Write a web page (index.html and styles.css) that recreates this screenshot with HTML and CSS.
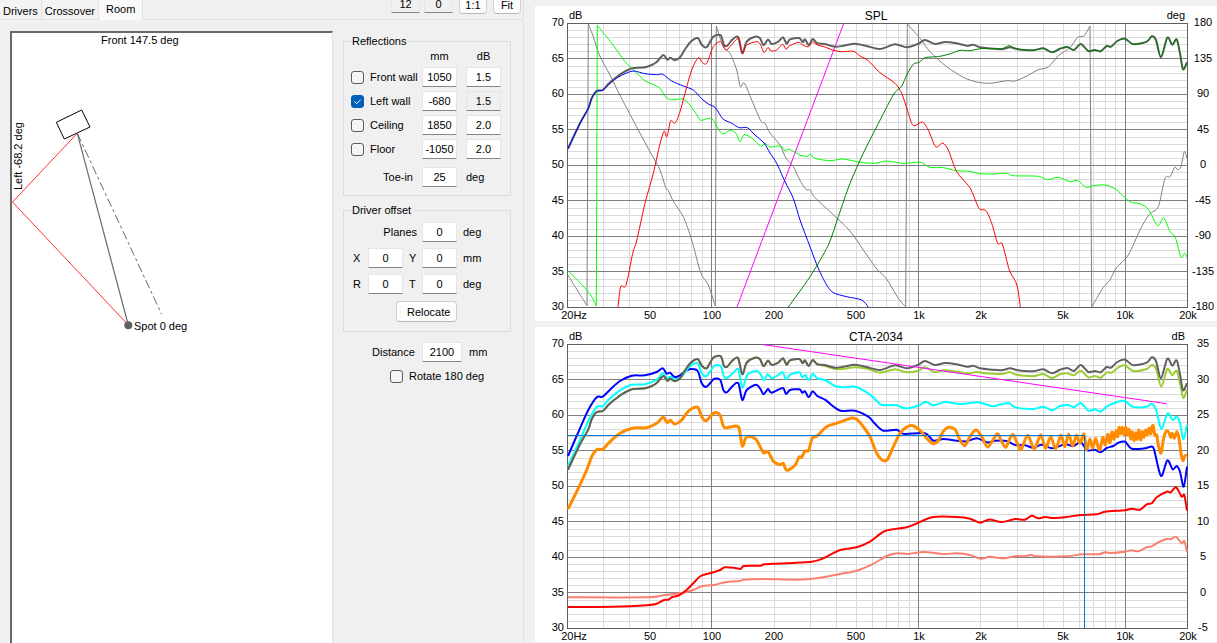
FILE: index.html
```html
<!DOCTYPE html>
<html lang="en">

<head>
    <meta charset="UTF-8">
    <meta name="viewport" content="width=device-width, initial-scale=1.0">
    <title>Room reflections</title>
    <link rel="stylesheet" href="styles.css">
</head>

<body>
    <div class="side">
        <div class="topbar">
            <div class="tabs" role="tablist">
                <button class="tab" role="tab">Drivers</button>
                <button class="tab" role="tab">Crossover</button>
                <button class="tab active" role="tab" aria-selected="true">Room</button>
            </div>
            <div class="scale">
                <input class="num gray" type="text" value="12" aria-label="Scale">
                <input class="num gray" type="text" value="0" aria-label="Offset">
                <button class="btn small">1:1</button>
                <button class="btn small">Fit</button>
            </div>
        </div>

        <div class="page">
            <div class="room">
                <svg width="320" height="400" viewBox="12 33 320 400">
                    <text x="101" y="44">Front 147.5 deg</text>
                    <text transform="translate(22 190) rotate(-90)">Left -68.2 deg</text>
                    <polygon class="box" points="56.3,122.3 81.7,110 90,127 64.3,139" />
                    <path class="axis" d="M77.3 133.3L161.5 314" />
                    <path class="direct" d="M77.3 133.3L128.3 325" />
                    <path class="bounce" d="M77.3 133.3L12.5 202L128.3 325" />
                    <circle class="spot" cx="128.3" cy="325.3" r="4" />
                    <text x="134" y="330">Spot 0 deg</text>
                </svg>
            </div>

            <form class="options">
                <fieldset>
                    <legend>Reflections</legend>
                    <div class="reflections">
                        <span></span>
                        <span class="head">mm</span>
                        <span class="head">dB</span>

                        <label class="check"><input type="checkbox"> Front wall</label>
                        <input class="num" type="text" value="1050" aria-label="Front wall mm">
                        <input class="num" type="text" value="1.5" aria-label="Front wall dB">

                        <label class="check"><input type="checkbox" checked> Left wall</label>
                        <input class="num" type="text" value="-680" aria-label="Left wall mm">
                        <input class="num gray" type="text" value="1.5" aria-label="Left wall dB">

                        <label class="check"><input type="checkbox"> Ceiling</label>
                        <input class="num" type="text" value="1850" aria-label="Ceiling mm">
                        <input class="num" type="text" value="2.0" aria-label="Ceiling dB">

                        <label class="check"><input type="checkbox"> Floor</label>
                        <input class="num" type="text" value="-1050" aria-label="Floor mm">
                        <input class="num" type="text" value="2.0" aria-label="Floor dB">

                        <label class="right" for="toein">Toe-in</label>
                        <input class="num" type="text" value="25" id="toein">
                        <span>deg</span>
                    </div>
                </fieldset>

                <fieldset>
                    <legend>Driver offset</legend>
                    <div class="offset">
                        <label class="planes" for="planes">Planes</label>
                        <input class="num" type="text" value="0" id="planes">
                        <span class="unit">deg</span>

                        <label for="offX">X</label>
                        <input class="num" type="text" value="0" id="offX">
                        <label class="mid" for="offY">Y</label>
                        <input class="num" type="text" value="0" id="offY">
                        <span class="unit">mm</span>

                        <label for="offR">R</label>
                        <input class="num" type="text" value="0" id="offR">
                        <label class="mid" for="offT">T</label>
                        <input class="num" type="text" value="0" id="offT">
                        <span class="unit">deg</span>
                    </div>
                    <button class="btn relocate" type="button">Relocate</button>
                </fieldset>

                <div class="distance">
                    <label for="distance">Distance</label>
                    <input class="num" type="text" value="2100" id="distance">
                    <span>mm</span>
                </div>
                <label class="check rotate"><input type="checkbox"> Rotate 180 deg</label>
            </form>
        </div>
    </div>

    <div class="charts">
        <svg class="chart" id="spl" viewBox="535 6 682 315" role="img" aria-label="SPL"></svg>
        <svg class="chart" id="cta" viewBox="535 6 682 315" role="img" aria-label="CTA-2034"></svg>
    </div>

    <script src="script.js"></script>
</body>

</html>
```
FILE: styles.css
```css
*{box-sizing: border-box;}

body{
    margin: 0;
    height: 100vh;
    display: flex;
    overflow: hidden;
    background: #f0f0f0;
    color: #000;
    font: 11px/12px "Liberation Sans", Arial, sans-serif;
}

button, input{font: inherit; color: inherit; margin: 0;}

/* left side */
.side{flex: none; width: 524px; display: flex; flex-direction: column; border-right: 1px solid #e2e2e2;}

.topbar{display: flex; justify-content: space-between; height: 20px; flex: none; border-bottom: 1px solid #e2e2e2;}
.tabs{display: flex;}
.tab{padding: 3px 3px 0px; background: #f3f3f3; border: 0px solid #e2e2e2; border-right-width: 1px; height: 19px;}
.tab.active{background: #f9f9f9; height: 20px; padding: 0px 7px 2px;}

.scale{display: flex; gap: 4px; margin-right: 2px; height: 13px;}
.scale .num{width: 29px; height: 13px; border-top: 0px; padding-bottom: 5px; line-height: 8px;}

.btn{
    height: 21px;
    background: #fdfdfd;
    border: 1px solid #d0d0d0;
    border-bottom-color: #b8b8b8;
    border-radius: 4px;
    padding: 0px 10px;
}
.btn.small{width: 28px; height: 14px; padding: 0px 0px 4px; margin-left: 2px; border-top: 0px; border-radius: 0px 0px 4px 4px; line-height: 8px;}

.num{
    width: 35px;
    height: 20px;
    padding: 0px 0px 1px;
    text-align: center;
    background: #fff;
    border: 1px solid #e5e5e5;
    border-bottom-color: #868686;
    border-radius: 1px;
}
.num.gray{background: #f0f0f0;}

.page{flex: 1; display: flex; min-height: 0; padding: 11px 12px 0px 10px; gap: 10px;}

.room{
    flex: 1;
    overflow: hidden;
    background: #fff;
    border: 0px solid #696969;
    border-width: 2px 1px 0px 2px;
    border-right-color: #e3e3e3;
}
.room svg{display: block;}
.box{fill: #fff; stroke: #000;}
.direct{fill: none; stroke: #696969; stroke-width: 1.2;}
.axis{fill: none; stroke: #696969; stroke-dasharray: 9 3 3 3;}
.bounce{fill: none; stroke: #f33;}
.spot{fill: #606060;}

/* option groups */
.options{width: 168px; padding-top: 4px;}
fieldset{margin: 0px 0px 8px; padding: 0px 8px 2px 7px; border: 1px solid #dcdcdc; min-width: 0;}
legend{padding: 0px 3px 0px 1px;}

.reflections{
    display: grid;
    grid-template-columns: 62px 35px 35px;
    grid-template-rows: 18px repeat(4, 24px) 32px;
    column-gap: 9px;
    align-items: center;
}
.head{text-align: center;}
.right{text-align: right;}

.check{display: flex; align-items: center; gap: 6px; white-space: nowrap;}
.check input{
    appearance: none;
    flex: none;
    width: 13px;
    height: 13px;
    border: 1px solid #5c5c5c;
    border-radius: 3px;
    background: #f5f5f5;
}
.check input:checked{
    border-color: #005fb8;
    background: #005fb8 url("data:image/svg+xml,%3Csvg xmlns='http://www.w3.org/2000/svg' viewBox='0 0 11 11'%3E%3Cpath d='M2.5 5.5L4.7 7.7L8.7 3.7' fill='none' stroke='white'/%3E%3C/svg%3E");
}

.offset{
    display: grid;
    grid-template-columns: 17px 35px 19px 35px auto;
    grid-auto-rows: 26px;
    align-items: center;
    padding-top: 3px;
}
.offset label{padding-left: 2px;}
.offset .planes{grid-column: 1 / 4; text-align: right; padding-right: 5px;}
.offset .mid{padding-left: 6px;}
.unit{padding-left: 6px;}
.relocate{display: block; margin: 4px 0px 7px 45px; width: 61px;}

.distance{display: flex; align-items: center; height: 24px; padding-left: 29px;}
.distance label{width: 50px;}
.distance .num{width: 40px; margin-right: 7px;}
.rotate{height: 24px; padding-left: 47px;}

/* charts */
.charts{flex: 1; min-width: 0; margin-left: 11px; padding-top: 6px; display: flex; flex-direction: column; gap: 6px;}
.chart{display: block; width: 100%; background: #fff; flex: none;}
.chart .title{font-size: 12px;}
.minor{stroke: #dcdcdc; shape-rendering: crispEdges;}
.major{stroke: #808080; shape-rendering: crispEdges;}
.frame{fill: none; stroke: #606060; shape-rendering: crispEdges;}
.start{text-anchor: start;}
.middle{text-anchor: middle;}
.end{text-anchor: end;}
.line{fill: none; stroke-width: 1; stroke-linejoin: round;}
.bold{stroke-width: 2;}
.heavy{stroke-width: 3;}
.cursor{fill: none; stroke: #0078d7;}
```
FILE: script.js
```js
"use strict";

const NS = "http://www.w3.org/2000/svg";
const plot = {left: 567.5, top: 23.5, width: 620, height: 284};

function add(svg, tag, attrs, text) {
    const el = document.createElementNS(NS, tag);
    for (const key in attrs) el.setAttribute(key, attrs[key]);
    if (text) el.textContent = text;
    svg.appendChild(el);
}

// log scale, 20 Hz - 20 kHz
function freqX(f) {
    return plot.left + Math.log10(f / 20) / 3 * plot.width;
}

function drawGrid(svg, title, rightUnit, rightMax, rightStep) {
    const right = plot.left + plot.width;
    const bottom = plot.top + plot.height;
    const snap = v => Math.floor(v) + 0.5;

    for (let i = 1; i < 40; i++) {
        const y = snap(plot.top + i * plot.height / 40);
        if (i % 5) add(svg, "path", {class: "minor", d: `M${plot.left} ${y}H${right}`});
    }
    for (let dec = 10; dec <= 10000; dec *= 10) {
        for (let k = 2; k < 10; k++) {
            const f = dec * k;
            if (f > 20 && f < 20000) add(svg, "path", {class: "minor", d: `M${snap(freqX(f))} ${plot.top}V${bottom}`});
        }
    }
    for (let i = 1; i < 8; i++) {
        const y = snap(plot.top + i * plot.height / 8 - 0.5);
        add(svg, "path", {class: "major", d: `M${plot.left} ${y}H${right}`});
    }
    [100, 1000, 10000].forEach(f => add(svg, "path", {class: "major", d: `M${snap(freqX(f))} ${plot.top}V${bottom}`}));
    add(svg, "rect", {class: "frame", x: plot.left, y: plot.top, width: plot.width, height: plot.height});

    for (let i = 0; i <= 8; i++) {
        const y = Math.floor(plot.top + i * plot.height / 8 + 3);
        add(svg, "text", {class: "end", x: 564, y: y}, String(70 - i * 5));
        add(svg, "text", {class: "middle", x: 1203, y: y}, String(rightMax - i * rightStep));
    }
    add(svg, "text", {class: "middle", x: 574, y: 319}, "20Hz");
    [[50, "50"], [100, "100"], [200, "200"], [500, "500"], [1000, "1k"], [2000, "2k"], [5000, "5k"], [10000, "10k"], [20000, "20k"]]
        .forEach(([f, label]) => add(svg, "text", {class: "middle", x: Math.round(freqX(f)), y: 319}, label));

    add(svg, "text", {class: "start", x: 569, y: 19}, "dB");
    add(svg, "text", {class: "end", x: 1185, y: 19}, rightUnit);
    add(svg, "text", {class: "title middle", x: 876, y: 20}, title);
}

// smooth curve through the points, "|" starts again after a phase jump
function drawLine(svg, color, data, cls) {
    let d = "";
    data.split("|").forEach(part => {
        const p = part.trim().split(/\s+/).map(s => s.split(",").map(Number));
        d += (d ? "L" : "M") + p[0];
        for (let i = 0; i < p.length - 1; i++) {
            const a = p[i - 1] || p[i], b = p[i], c = p[i + 1], e = p[i + 2] || c;
            d += `C${b[0] + (c[0] - a[0]) / 7} ${b[1] + (c[1] - a[1]) / 7} ${c[0] - (e[0] - b[0]) / 7} ${c[1] - (e[1] - b[1]) / 7} ${c[0]} ${c[1]}`;
        }
    });
    add(svg, "path", {class: "line " + (cls || ""), stroke: color, d: d});
}

const totalLow = `568,148.7 580,123.3 588.3,108.3 591.7,98.3 596.7,91 602.7,90 608.3,84 615,78.3 621.7,73.3 630,69 634,68
    645,67.3 651.7,65 656.7,62 663.3,55 667.3,59.7 670.3,57.7 674.7,60.3 680,57.3 685,49.3 690.7,41.7 697.7,38 701.7,44.7
    706.7,47.3 713.3,36.7 720.7,35.3 724,45 727.3,45.7 731.7,40.3 738,37 742.3,53.3 746.7,41.7 755,36.7 760,38.3
    763.7,45.3 768,39.5 771.7,44 778.3,41.7 783,37.3 786.7,43.7 790,39.3 799.3,38 802.7,42.3 805,39.3 808.7,45 812.7,39 817.3,43.3 `;

const totalMid = `825,44 835,46.7 843.3,45.7 855,43.7 866.7,46 880,49 895,44.3 906.7,47.3 918.3,43.7 925,40 935,44
    945,42 956.7,43.3 966.7,45.7 973.3,44.7 980,47.3 991.7,48.7 1001.7,49.3 1010,47.3 1016.7,49 `;

const totalHigh = `1025,50 1035,50 1043.3,48.3 1052.3,52.3 1060,48.7 1067.3,47 1074,50 1080.7,44 1088.3,51 1095,50 1100.7,51.3
    1106.7,46 1111,46.7 1117.3,41 1125,38.7 1133.3,44.3 1146.7,41.7 1151.7,36.3 1156,40 1161,57.3 1167.3,37.7 1172.3,44.7
    1176.7,39.3 1180,53.3 1183,69.3 1187,62.3`;

const total = totalLow + totalMid + totalHigh;

const spl = document.getElementById("spl");
drawGrid(spl, "SPL", "deg", 180, 45);

// phase
drawLine(spl, "#808080", `568,275 576.7,289.3 587,305.7 | 588.3,24 593.3,36.7 599.3,55 610,75 620.7,96.7 638.3,130 650,151.7
    660,170 665.7,187.7 668.3,190.3 673.3,201.3 683.3,216.7 691.7,240 700.7,272.7 708.3,285 715.3,306 | 716.3,26 723.3,46.7
    730,53.3 736.7,70 740.3,86.7 744.3,83 751.7,100 760.7,120.7 765,123.3 770,133 780,145 786,158.3 793.3,166.7 800.7,181.7
    806.7,190 810.3,189.7 815,197.7 838.3,219.3 851.7,233.3 875,266.7 886.7,279.3 898.3,298.3 905.7,306.7 | 907.3,24 920,38.3
    930,51.7 946.7,66.7 963.3,77.3 976.7,82 990,83.3 1006.7,80.7 1015,81 1026.7,76 1038.3,69.7 1048.3,67 1058.3,55.7
    1070,47.7 1077.7,37.3 1084,36 1090,26 | 1091.7,306.7 1096.7,298.3 1103.3,287.3 1110,280 1116,268.3 1128.3,255 1140,230
    1149.3,214.3 1158.3,206.7 1165,178.3 1170,176.7 1174.7,167.3 1177.7,169.7 1181,166.7 1184.3,151.7 1187,158.3`);

drawLine(spl, "#00ff00", `568,270.7 576.7,279.3 586.7,290 591.7,296.7 596.3,306 | 597.3,25.3 601.7,30.7 613.3,45.3 625,61.7
    635,71.3 645,80.7 659.3,87.7 665,96.3 671.7,99.7 682.7,99 690,105 696.7,114.7 700.7,120.3 708.3,118.3 713.3,120.3
    722,133.7 730,130.3 736,133.3 740,141.7 744.3,134.7 752.7,138.7 760.7,146.3 765,143.3 770,147 780.7,146 785,150.7
    789.3,149.3 800,155 807.7,156.3 810.3,154 815,158.3 830,160.7 843.3,159 860,162.3 875,163.3 886.7,161 903.3,163.3
    920,162.3 930,167.3 943.3,167.7 956.7,170.7 970,171.3 980,173.7 993.3,174 1006.7,173.3 1013.3,175.7 1038.3,176.3
    1047.7,179.7 1058.3,177.3 1070,181.7 1077.7,180.3 1086,187.3 1093.3,185.7 1104,185 1115,188.7 1130,201.7 1140,203.7
    1148.3,209.3 1157.7,225.7 1163.7,217.7 1170,231.7 1175,236.7 1181,257 1184.7,253 1187,257.3`);

drawLine(spl, "#ff00ff", "737,307 843.7,23.5");

drawLine(spl, "#606060", total, "bold");

// drivers
drawLine(spl, "#0000ff", `568,148.7 580,123.3 588.3,108.3 591.7,98.3 596.7,91 602.7,90.3 608.3,85 615,79.3 621.7,75.3 626.7,73
    634,71 645,73.7 656.7,74.7 662.7,74.3 671.7,81 683.3,86 693.3,90 701.7,98.7 708.3,104 715.7,108 722.7,118.7
    731.7,123.3 739.3,127.7 747.3,127.7 755,135 764,143 770,153 776.7,163.3 785,181.7 793.3,198.3 800,220 810,246.7
    818.3,268.3 826.7,285 833.3,292.7 846.7,296.7 861.7,300 868.3,307`);

drawLine(spl, "#ff0000", `618,307 620.7,286.7 626,285.3 632.7,253.3 636.7,240.7 645,203.3 653.3,173.3 659.3,146.7 664,131.3
    667,136.7 670.7,120.7 675,123.3 680,111.7 685,93.3 691.7,70 698.3,57.7 701.7,62 706.7,63.3 713.3,46.7 720.7,41.7
    725.7,50 730,46.7 738.7,38.3 742.3,53.3 746.7,45 756.7,41.7 760.7,45 764,52.7 768,47.5 771,51 776.7,50 782.7,44.3
    786,49.3 789.3,46 798.3,42.3 802.7,45 808.3,46.7 812.7,42 817.3,45 825,47 833.3,50.3 841.7,51.7 853.3,51.3 860,56
    868.3,60.7 880,72.7 895,83.3 901.7,93.3 907.3,110 911.7,123.3 915,125.7 922.3,122 928.3,130 935.7,146.7 942.7,143
    948.3,150 956.7,171.7 969.3,186.7 973.3,195 979.3,208.7 986,210.7 991.7,223.3 997.7,243.3 1002.3,244 1009.3,270
    1015.7,281.7 1018.3,291.7 1020.3,307`);

drawLine(spl, "#008000", `788.3,307 810,276.7 828.3,245 838.3,216.7 850,183.3 863.3,153.3 876.7,126.7 893.3,95 901.7,86
    906.7,75 913.3,64.3 919.3,62.3 925,57.7 940,56.3 951.7,53.3 960,50.3 970,50.7 980,48.7 990,48.3 1001.7,48.7 1009,45.7
    1015,48.3 ` + totalHigh);

const cta = document.getElementById("cta");
drawGrid(cta, "CTA-2034", "dB", 35, 5);

// directivity indexes
drawLine(cta, "#fa8072", `568,276.3 646.7,276.3 663.3,274.3 683.3,271.7 693.3,269 701.7,265.3 713.3,264 726.7,261 740,260
    743.3,258.7 763.3,258 796.7,258.7 816.7,257.3 840,253 856.7,249.7 871.7,243.7 886.7,235 896.7,232.3 908.3,233 923.3,231
    943.3,233 956.7,232.3 970,234 980.7,237.7 990,235.7 1003.3,237.3 1016.7,235 1025,235.3 1031,233.7 1036.7,235.3
    1066.7,235.3 1081.7,233.3 1098.3,233.3 1105,231.3 1110,232 1125,230.7 1131,229.3 1138.3,230.3 1146.7,226.3 1151.7,225.3
    1158.3,221.3 1166.7,218 1170.7,218.3 1176,215.7 1181.7,222.3 1184.3,220 1187,230.7`, "bold");

drawLine(cta, "#ff0000", `568,286 596.7,286 630,285.3 646.7,284.3 656.7,282.7 664,279 668.3,278.7 672.3,276 678.3,274.7
    685,270.3 693.3,262.3 700.7,255 710,252.3 720,249 725,246.3 735,247 740.7,248 744,245 760,244.7 764,243.3 773.3,242.7
    793.3,242 811.7,240.7 823.3,237.3 840,229 856.7,226.3 870,220.7 885,210 906.7,206.3 918.3,201.7 933.3,196 956.7,196
    970,197.7 980,201.7 989.3,198.5 1001.7,201 1015,198 1025,198.7 1031.7,194.7 1038.3,197.3 1045,196 1053.3,197 1066.7,196
    1080,194 1096.7,193.3 1105,190.7 1125,189.3 1131.7,187.7 1140,188.7 1146.7,183.3 1151.7,182.3 1156.7,176.3 1166.7,170.7
    1170.7,171.3 1176,166.3 1181.7,175.7 1184.3,174 1187,189.7`, "bold");

// sound power, reflections, listening window, on axis
drawLine(cta, "#0000ff", `568,135 580,107.3 588.3,89 596.7,76.3 602.7,75.7 610,68.7 620,60 631.7,54.7 645,54.3 656.7,51
    662.7,47.3 666.7,52.7 670,51.7 674.7,56 680,54.3 684,51 690.7,48 697.7,50 701.7,62.3 706,66 710,62.3 714.3,57.7
    720.3,59 723.3,69 726.7,71.3 732.7,65 738.3,62.3 742.3,79 746.7,69 756,63.7 760,67.3 763.7,73.3 768,68 771.7,71.7
    782.7,67 786,73 790,69 799.3,68.3 802.3,71.7 805,70.3 808.7,76.3 812.7,70.3 817.3,75 825,78.7 835,86.7 841.7,90
    855,89.7 868.3,95.7 875,102.7 883.3,109.7 896.7,108.7 904,113 925,112.3 933.3,119.7 943.3,118 956.7,119.7 966.7,120.3
    976.7,117.3 988,121.5 995,119.7 1006.7,120 1015,124 1025,124.3 1033.3,126.7 1041.7,123.7 1052.3,127.3 1065,123.3
    1073.3,125 1080.7,121.3 1087.3,129.3 1095,128.7 1100.7,131.3 1106.7,127 1113.3,125 1118.3,121.7 1125,120.7 1131.7,127.7
    1145,127.3 1150.7,125.7 1154,128.3 1161,155 1167.3,139.3 1172.7,148.3 1176.7,145 1180,150.7 1183.7,165.7 1187,145.7`, "bold");

drawLine(cta, "#00ffff", `568,145 580,119 588.3,100 596.7,86 602.7,85.3 608.3,79 620,69.3 631.7,63.7 645,63.3 656.7,58.7
    662.7,52.3 667.3,57.7 670.3,55.7 674.7,58.3 681.7,55.7 686.7,49 691.7,43.7 697.7,42.3 701.7,52.3 706.7,55 714,45
    720.7,45.3 724,55.7 727.3,57 732.7,52.3 738.3,48.3 742.3,66.7 747.3,54 756,50 760,52.3 764,59.3 767.5,53.3 771.7,57.3
    776.7,55 782.7,51.3 786,58.3 790.7,53.3 799.3,51.3 802.3,56.3 805,54 808.7,59 812.7,53 817.3,57.3 825,59 835,65
    843.3,66.3 855,65.7 868.3,72.3 875,78.3 881.7,83.7 896.7,84.3 905,87.3 918.3,84.7 925.7,80.7 933.3,84.3 945,81 960,83
    976.7,81.3 985,83 993.3,85.3 1001.7,83 1009.3,82.3 1015,86.3 1033.3,88 1043.3,85.7 1052.3,89.3 1060,85 1068.3,84
    1074,86.3 1080.7,82 1088.3,89.7 1095,88.3 1100.7,90.7 1106.7,85.7 1117.3,81 1125,80 1132.7,85.7 1146.7,85.7 1151.7,82.7
    1156,88.3 1161.3,107.7 1167.7,92.3 1172.7,99 1176.7,95.7 1180,102.3 1183.3,118.3 1187,104`, "bold");

drawLine(cta, "#9acd32", totalLow + `825,45 838.3,48.3 855,46.3 868.3,48 880,51.7 895,48.3 906.7,51.3 918.3,49.7 925,46.3
    935,51.3 943.3,49.3 956.7,50.7 968.3,52.3 976.7,51 985,52.3 1001.7,53 1009.3,51 1016.7,53.7 1028.3,55 1035,55 1043.3,53
    1051.7,57 1060,53.3 1067.3,52.3 1074,54.3 1080.7,49.7 1088.3,56.3 1095,55 1100.7,56.7 1106.7,51.3 1111.7,51.7
    1118.3,46.3 1125,44.3 1133.3,50 1146.7,48 1151.7,44 1156,47.3 1161.3,65.7 1167.3,48 1172.3,54.3 1176.7,49.7
    1180,62.3 1183.3,77 1187,68.3`, "bold");

drawLine(cta, "#606060", total, "bold");
drawLine(cta, "#ff00ff", "762.3,23.5 1166.7,82.7");

// in-room
drawLine(cta, "#ff8c00", `568,188 576.7,170.7 586.7,149 591.7,135.7 596.7,128.7 602.7,128.3 608.3,122.3 620,112.3 633.3,107
    646.7,106.7 656.7,102.3 663.3,96.3 667,101.7 670.3,99.3 674.7,103 681.7,99 686,93 690.7,88.3 697.7,86.3 701.7,95.7
    706,99.7 714,92 720,94 724,106.3 731.7,105.7 738.7,106.3 742.3,125 746.7,115.7 756,118.3 763.3,131.7 768,130.5
    773.3,140.3 780,143.7 783.3,142.3 786.7,149.3 795,144.3 799,136 801.7,136.3 805,130 808.7,129.3 812.3,117 817.3,114.7
    826.7,105.7 838.3,101.7 851.7,97 856.7,98.3 863.3,105.7 870,115.7 876.7,132.3 881.7,138.7 887.3,138.7 893.3,125.7
    900,112.3 906.7,106 912.7,104.7 920,109.3 926.7,117.3 933.3,122.7 938.3,119.7 943.3,110.3 948.3,106.3 955,108.3
    960,119 965,124.7 970,115.7 976,108.7 981.7,115.7 987.5,126 993.3,118.3 997.7,112.7 1001.7,120.7 1005.7,126.3
    1010,117.3 1013.3,113.7 1017.3,122.3 1021,128.7 1027.7,114.3 1034.3,128 1040.7,113.7 1045.7,127.3 1050.7,115.7
    1055.7,127.7 1061,114.3 1064.7,125.7 1068.7,113.3 1072.7,125 1076.3,114.3 1080,122.3 1084,113 1086.7,128.3 1090,118
    1092.7,127.3 1095.7,117.3 1098.3,126.7 1100.3,128.3 1102.7,116.3 1105.3,124 1107.7,113.3 1110,121.7 1112,111 1114,118.3
    1116,109.7 1117.7,115.7 1119,106.3 1120.7,113 1122.3,106.3 1124,114 1125.7,105.7 1127.3,114 1129,108.3 1130.7,118
    1132.3,110.7 1134,119.7 1135.7,111.7 1137.3,118.3 1139,109 1140.7,119 1142.3,110.7 1144,116.3 1145.7,109 1147.3,114
    1149,107.3 1150.7,113 1152,105.7 1153.3,105 1154.7,114 1156.7,114 1158,122.3 1161,132.3 1163.3,119 1165.3,111.7
    1167.3,109.7 1169.3,112.3 1170.7,116.7 1172.3,112.3 1174.3,117.3 1176.7,110.7 1178.7,115.7 1181.3,134 1183,139.7
    1184.7,135 1187,134`, "heavy");

// readout cursor
add(cta, "path", {class: "cursor", d: "M568 114.5H1084.5V307"});
```
